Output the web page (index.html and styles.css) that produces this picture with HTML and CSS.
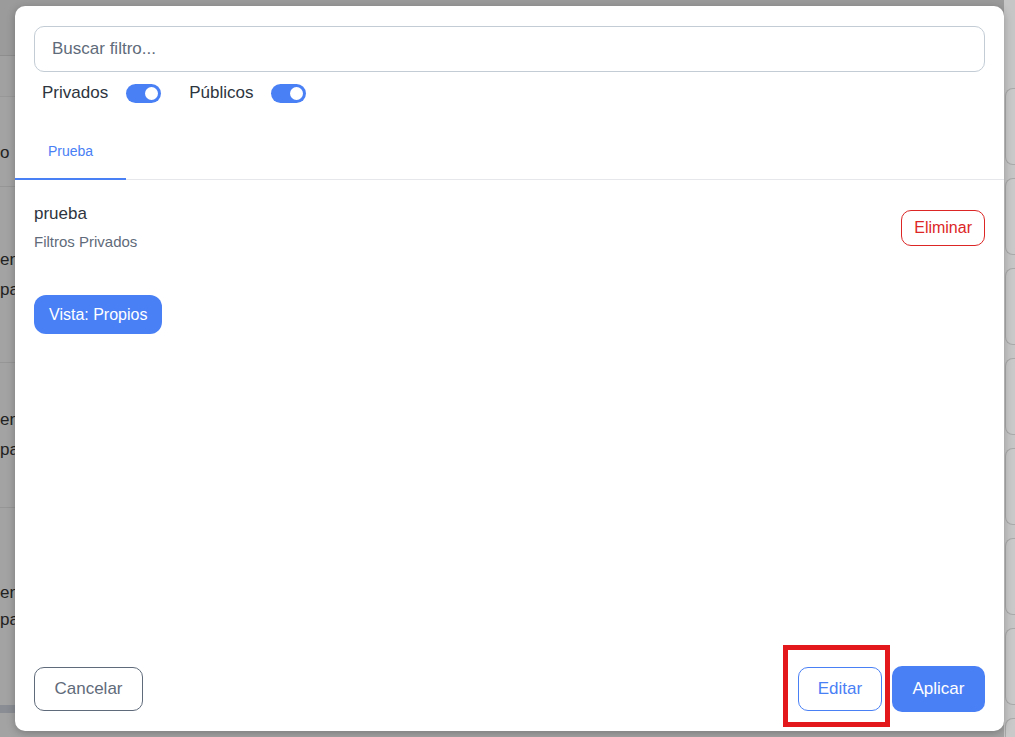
FILE: index.html
```html
<!DOCTYPE html>
<html lang="es">
<head>
<meta charset="utf-8">
<title>Filtros</title>
<link rel="stylesheet" href="styles.css">
</head>
<body>
<div class="page">
  <div class="page-main">
    <div class="pm-header"></div>
    <div class="pm-toolbar"></div>
    <div class="pm-row pm-row-title"><span class="pm-text">o</span></div>
    <div class="pm-row pm-row-item"><span class="pm-text">encargado</span><span class="pm-text">para</span></div>
    <div class="pm-row pm-row-item2"><span class="pm-text">encargado</span><span class="pm-text">para</span></div>
    <div class="pm-row pm-row-item3"><span class="pm-text">encargado</span><span class="pm-text">para</span></div>
    <div class="pm-bar"></div>
  </div>
  <div class="page-side">
    <div class="side-card"></div>
    <div class="side-card"></div>
    <div class="side-card"></div>
    <div class="side-card"></div>
    <div class="side-card"></div>
    <div class="side-card"></div>
    <div class="side-card"></div>
    <div class="side-card"></div>
  </div>
</div>

<div class="modal">
  <div class="modal-head">
    <input class="search" type="text" placeholder="Buscar filtro...">
    <div class="toggles">
      <label class="toggle-item">
        <span class="toggle-label">Privados</span>
        <span class="switch"><span class="knob"></span></span>
      </label>
      <label class="toggle-item">
        <span class="toggle-label">Públicos</span>
        <span class="switch"><span class="knob"></span></span>
      </label>
    </div>
  </div>
  <div class="tabs">
    <div class="tab active">Prueba</div>
  </div>
  <div class="modal-body">
    <div class="filter-row">
      <div class="filter-info">
        <div class="filter-name">prueba</div>
        <div class="filter-type">Filtros Privados</div>
      </div>
      <button class="btn btn-danger-outline">Eliminar</button>
    </div>
    <div class="chips">
      <span class="chip">Vista: Propios</span>
    </div>
  </div>
  <div class="modal-foot">
    <button class="btn btn-foot btn-grey-outline">Cancelar</button>
    <div class="foot-right">
      <button class="btn btn-foot btn-blue-outline">Editar</button>
      <button class="btn btn-foot btn-primary">Aplicar</button>
    </div>
  </div>
</div>

<div class="highlight"></div>
</body>
</html>
```

FILE: styles.css
```css
* { box-sizing: border-box; }

html, body {
  margin: 0;
  width: 1015px;
  height: 737px;
  overflow: hidden;
}

body {
  font-family: "Liberation Sans", Arial, sans-serif;
  background: #a3a3a3;
  position: relative;
}

/* dimmed page behind the modal */
.page {
  display: flex;
  height: 737px;
  overflow: hidden;
}

.page-main {
  flex: 1;
  display: flex;
  flex-direction: column;
  background: #a3a3a3;
  overflow: hidden;
}

.pm-header {
  flex: none;
  height: 56px;
  background: #9b9b9b;
  border-bottom: 1px solid #8e8e8e;
}

.pm-toolbar {
  flex: none;
  height: 41px;
  background: #a1a1a1;
  border-bottom: 1px solid #989898;
}

.pm-row {
  flex: none;
  display: flex;
  flex-direction: column;
  justify-content: center;
  border-bottom: 1px solid #969696;
  color: #222;
  font-size: 17px;
  white-space: nowrap;
}

.pm-row-title {
  height: 90px;
  padding-top: 22px;
}

.pm-row-item {
  height: 176px;
  gap: 8px;
}

.pm-row-item2 {
  height: 145px;
  gap: 8px;
}

.pm-row-item3 {
  height: 197px;
  gap: 5px;
  border-bottom: none;
}

.pm-text { line-height: 22px; }

.pm-bar {
  flex: none;
  height: 8px;
  background: #8a8e94;
}

.page-side {
  flex: none;
  width: 11px;
  background: #c6c6c6;
  display: flex;
  flex-direction: column;
  gap: 13px;
  padding-top: 88px;
  padding-left: 1px;
  overflow: hidden;
}

.side-card {
  flex: none;
  height: 77px;
  border: 1px solid #a9a9a9;
  border-right: none;
  border-radius: 8px 0 0 8px;
  background: #c9c9c9;
}

/* modal (overlay) */
.modal {
  position: absolute;
  left: 15px;
  top: 6px;
  width: 989px;
  height: 725px;
  background: #fff;
  border-radius: 10px;
  box-shadow: 0 2px 8px rgba(0, 0, 0, 0.25);
  display: flex;
  flex-direction: column;
}

.modal-head {
  padding: 20px 19px 0 19px;
}

.search {
  display: block;
  width: 100%;
  height: 46px;
  border: 1px solid #c3ccd5;
  border-radius: 10px;
  padding: 0 17px;
  font-family: "Liberation Sans", Arial, sans-serif;
  font-size: 17px;
  color: #2d3540;
  outline: none;
  background: #fff;
}

.search::placeholder {
  color: #5f6b7a;
}

.toggles {
  display: flex;
  align-items: center;
  gap: 28px;
  margin-top: 10px;
  padding-left: 8px;
  height: 22px;
}

.toggle-item {
  display: flex;
  align-items: center;
  gap: 18px;
}

.toggle-label {
  font-size: 17px;
  color: #2d3540;
  line-height: 22px;
}

.switch {
  width: 35px;
  height: 19px;
  border-radius: 10px;
  background: #4a80f5;
  display: flex;
  align-items: center;
  justify-content: flex-end;
  padding-right: 3px;
}

.knob {
  width: 13px;
  height: 13px;
  border-radius: 50%;
  background: #fff;
}

.tabs {
  display: flex;
  margin-top: 18px;
  border-bottom: 1px solid #e5e7eb;
}

.tab {
  width: 111px;
  padding: 19px 0 17px 33px;
  line-height: 20px;
  font-size: 14px;
  color: #4a80f5;
  border-bottom: 2px solid transparent;
  margin-bottom: -1px;
}

.tab.active {
  border-bottom-color: #4a80f5;
}

.modal-body {
  padding: 0 19px;
}

.filter-row {
  display: flex;
  align-items: center;
  justify-content: space-between;
  margin-top: 24px;
}

.filter-name {
  font-size: 17px;
  line-height: 20px;
  color: #2d3540;
}

.filter-type {
  margin-top: 9px;
  font-size: 15px;
  line-height: 18px;
  color: #5f6b7a;
}

.btn {
  font-family: "Liberation Sans", Arial, sans-serif;
  background: #fff;
  cursor: pointer;
  border-radius: 10px;
}

.btn-danger-outline {
  height: 36px;
  padding: 0 12px;
  border: 1px solid #dc2626;
  color: #dc2626;
  font-size: 16px;
}

.chips {
  display: flex;
  margin-top: 44px;
}

.chip {
  display: inline-flex;
  align-items: center;
  height: 39px;
  padding: 0 15px;
  border-radius: 12px;
  background: #4a80f5;
  color: #fff;
  font-size: 16px;
}

.modal-foot {
  margin-top: auto;
  padding: 0 19px 19px 19px;
  display: flex;
  align-items: center;
  justify-content: space-between;
}

.foot-right {
  display: flex;
  align-items: center;
  gap: 10px;
}

.btn-foot {
  height: 44px;
  font-size: 17px;
}

.btn-grey-outline {
  width: 109px;
  border: 1px solid #5f6b7a;
  color: #5f6b7a;
}

.btn-blue-outline {
  width: 84px;
  border: 1px solid #4a80f5;
  color: #4a80f5;
}

.btn-primary {
  width: 93px;
  height: 46px;
  border: none;
  background: #4a80f5;
  color: #fff;
}

/* annotation box over the Editar button */
.highlight {
  position: absolute;
  left: 783px;
  top: 645px;
  width: 107px;
  height: 82px;
  border: 5px solid #e3181d;
  pointer-events: none;
}
```
